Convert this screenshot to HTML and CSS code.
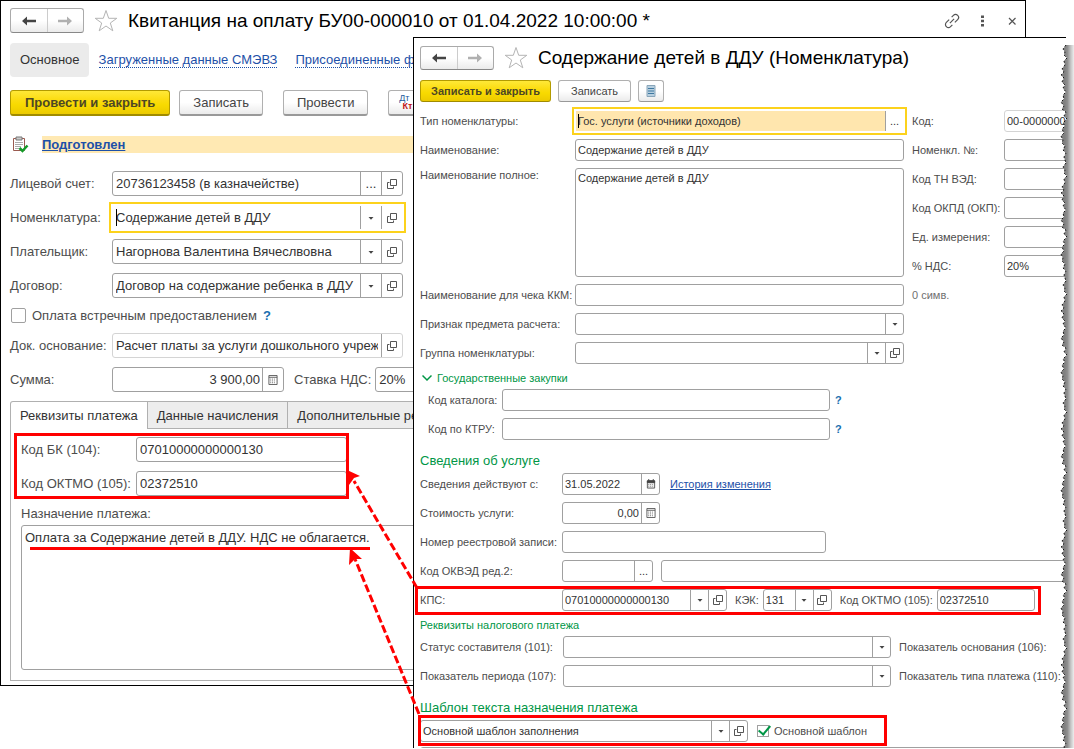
FILE: index.html
```html
<!DOCTYPE html>
<html lang="ru">
<head>
<meta charset="utf-8">
<title>Квитанция на оплату</title>
<link rel="stylesheet" href="styles.css">
</head>
<body>
<svg class="defs" aria-hidden="true">
  <symbol id="back" viewBox="0 0 16 12"><path d="M1 6L6 1.500V4.800H15V7.200H6V10.500Z" fill="#444"/></symbol>
  <symbol id="fwd" viewBox="0 0 16 12"><path d="M15 6L10 1.500V4.800H1V7.200H10V10.500Z" fill="#b0b0b0"/></symbol>
  <symbol id="star" viewBox="0 0 24 24"><path d="M12 1.500L14.700 9.300H22.800L16.300 14L18.800 21.800L12 17L5.200 21.800L7.700 14L1.200 9.300H9.300Z" fill="#fff" stroke="#b4b4b4"/></symbol>
  <symbol id="open" viewBox="0 0 10 10"><path d="M3.500 .5H9.500V6.500H3.500ZM2.500 3.500H.5V9.500H6.500V7.500" fill="none" stroke="#555"/></symbol>
  <symbol id="down" viewBox="0 0 10 10"><path d="M2.500 4H7.500L5 6.800Z" fill="#444"/></symbol>
  <symbol id="calc" viewBox="0 0 10 11"><path d="M.5 .5H9.500V10.500H.5ZM.5 2.500H9.500" fill="none" stroke="#555"/><path d="M2 4.500H8M2 6.500H8M2 8.500H8" stroke="#666" stroke-dasharray="1 1"/></symbol>
  <symbol id="date" viewBox="0 0 10 11"><path d="M1 2H9V10H1Z" fill="#eee" stroke="#555"/><path d="M1 2H9V4H1ZM2.500 0V3M7.500 0V3" fill="#444" stroke="#444"/><path d="M2 6H8M2 8H8" stroke="#888" stroke-dasharray="1 1"/></symbol>
</svg>

<main class="desk">
  <section class="window receipt">
    <header class="titlebar">
      <div class="history"><button aria-label="Назад"><svg><use href="#back"/></svg></button><button aria-label="Вперед"><svg><use href="#fwd"/></svg></button></div>
      <button class="star" aria-label="В избранное"><svg><use href="#star"/></svg></button>
      <h1>Квитанция на оплату БУ00-000010 от 01.04.2022 10:00:00 *</h1>
      <div class="tools">
        <button aria-label="Ссылка"><svg viewBox="0 0 16 16"><g transform="rotate(-45 8 8)" fill="none" stroke="#555" stroke-width="1.200"><path d="M7 5H3A3 3 0 0 0 3 11H5.500M9 11H13A3 3 0 0 0 13 5H10.500M5 8H11"/></g></svg></button>
        <button aria-label="Меню"><svg viewBox="0 0 16 16"><path d="M7 2.500H10V5H7ZM7 6.800H10V9.300H7ZM7 11H10V13.500H7Z" fill="#555"/></svg></button>
        <button aria-label="Закрыть"><svg viewBox="0 0 16 16"><path d="M5 5L11.500 11.500M11.500 5L5 11.500" stroke="#555" stroke-width="1.200"/></svg></button>
      </div>
    </header>
    <nav class="sections">
      <a class="current" href="#main">Основное</a>
      <a href="#smev">Загруженные данные СМЭВЗ</a>
      <a href="#files">Присоединенные файлы</a>
    </nav>
    <div class="commands">
      <button class="btn primary">Провести и закрыть</button>
      <button class="btn">Записать</button>
      <button class="btn post">Провести</button>
      <button class="btn entries" aria-label="Дт Кт"><span class="dt">Дт</span><span class="kt">Кт</span></button>
    </div>
    <div class="status">
      <svg viewBox="0 0 17 17"><path d="M1.500 2.500H12.500V14.500H1.500Z" fill="#fff" stroke="#9a5a50"/><path d="M4 1H10V4H4Z" fill="#ccc" stroke="#777"/><path d="M3 6.500H11M3 8.500H11M3 10.500H9M3 12.500H7" stroke="#aaa"/><path d="M7.500 12L10.500 15L15.500 9.500" fill="none" stroke="#149a28" stroke-width="2.500"/></svg>
      <a href="#state">Подготовлен</a>
    </div>
    <div class="form">
      <div class="row"><label for="account">Лицевой счет:</label><div class="field"><input id="account" value="20736123458 (в казначействе)"><button aria-label="Выбрать">...</button><button aria-label="Открыть"><svg><use href="#open"/></svg></button></div></div>
      <div class="row"><label for="item">Номенклатура:</label><div class="field active"><span class="caret"></span><input id="item" value="Содержание детей в ДДУ"><button aria-label="Список"><svg><use href="#down"/></svg></button><button aria-label="Открыть"><svg><use href="#open"/></svg></button></div></div>
      <div class="row"><label for="payer">Плательщик:</label><div class="field"><input id="payer" value="Нагорнова Валентина Вячеслвовна"><button aria-label="Список"><svg><use href="#down"/></svg></button><button aria-label="Открыть"><svg><use href="#open"/></svg></button></div></div>
      <div class="row"><label for="contract">Договор:</label><div class="field"><input id="contract" value="Договор на содержание ребенка в ДДУ"><button aria-label="Список"><svg><use href="#down"/></svg></button><button aria-label="Открыть"><svg><use href="#open"/></svg></button></div></div>
      <div class="check"><input type="checkbox" id="counter"><label for="counter">Оплата встречным предоставлением</label><button class="help">?</button></div>
      <div class="row"><label for="basis">Док. основание:</label><div class="field readonly"><input id="basis" value="Расчет платы за услуги дошкольного учреждения" readonly><button aria-label="Открыть"><svg><use href="#open"/></svg></button></div></div>
      <div class="row"><label for="sum">Сумма:</label><div class="field sum"><input id="sum" value="3 900,00"><button aria-label="Калькулятор"><svg><use href="#calc"/></svg></button></div><label class="rate" for="rate">Ставка НДС:</label><div class="field short"><input id="rate" value="20%"></div></div>
    </div>
    <div class="tabs"><button class="selected">Реквизиты платежа</button><button>Данные начисления</button><button>Дополнительные реквизиты</button></div>
    <div class="panel">
      <div class="row"><label for="kbk">Код БК (104):</label><div class="field"><input id="kbk" value="07010000000000130"></div></div>
      <div class="row"><label for="oktmo">Код ОКТМО (105):</label><div class="field"><input id="oktmo" value="02372510"></div></div>
      <div class="purpose"><label for="purpose">Назначение платежа:</label><textarea id="purpose">Оплата за Содержание детей в ДДУ. НДС не облагается.</textarea></div>
    </div>
  </section>

  <section class="window item">
    <header class="titlebar">
      <div class="history"><button aria-label="Назад"><svg><use href="#back"/></svg></button><button aria-label="Вперед"><svg><use href="#fwd"/></svg></button></div>
      <button class="star" aria-label="В избранное"><svg><use href="#star"/></svg></button>
      <h1>Содержание детей в ДДУ (Номенклатура)</h1>
    </header>
    <div class="commands">
      <button class="btn primary">Записать и закрыть</button>
      <button class="btn">Записать</button>
      <button class="btn report" aria-label="Отчет"><svg viewBox="0 0 10 12"><path d="M1 .5H9V11.500H1Z" fill="#b8d0e0" stroke="#8aa6ba"/><path d="M2 3.500H8M2 6H8M2 8.500H8" stroke="#3f78a0"/></svg></button>
    </div>
    <div class="columns">
      <div class="stack">
        <div class="row"><label for="kind">Тип номенклатуры:</label><div class="field active tinted"><span class="caret"></span><input id="kind" value="Гос. услуги (источники доходов)"><button aria-label="Выбрать">...</button></div></div>
        <div class="row"><label for="name">Наименование:</label><div class="field"><input id="name" value="Содержание детей в ДДУ"></div></div>
        <div class="row tall"><label for="full">Наименование полное:</label><textarea id="full">Содержание детей в ДДУ</textarea></div>
        <div class="row"><label for="kkm">Наименование для чека ККМ:</label><div class="field"><input id="kkm"></div></div>
        <div class="row"><label for="subject">Признак предмета расчета:</label><div class="field"><input id="subject"><button aria-label="Список"><svg><use href="#down"/></svg></button></div></div>
        <div class="row"><label for="group">Группа номенклатуры:</label><div class="field"><input id="group"><button aria-label="Список"><svg><use href="#down"/></svg></button><button aria-label="Открыть"><svg><use href="#open"/></svg></button></div></div>
      </div>
      <div class="stack codes">
        <div class="row"><label for="code">Код:</label><div class="field readonly"><input id="code" value="00-00000001" readonly></div></div>
        <div class="row"><label for="num">Номенкл. №:</label><div class="field"><input id="num"></div></div>
        <div class="row"><label for="tnved">Код ТН ВЭД:</label><div class="field"><input id="tnved"></div></div>
        <div class="row"><label for="okpd">Код ОКПД (ОКП):</label><div class="field"><input id="okpd"></div></div>
        <div class="row"><label for="unit">Ед. измерения:</label><div class="field"><input id="unit"></div></div>
        <div class="row"><label for="vat">% НДС:</label><div class="field"><input id="vat" value="20%"></div></div>
        <div class="row count">0 симв.</div>
      </div>
    </div>
    <button class="group"><svg viewBox="0 0 10 8"><path d="M.5 1.500L5 6L9.500 1.500" fill="none" stroke="#009646" stroke-width="1.500"/></svg>Государственные закупки</button>
    <div class="stack purchase">
      <div class="row"><label for="catalog">Код каталога:</label><div class="field"><input id="catalog"></div><button class="help">?</button></div>
      <div class="row"><label for="ktru">Код по КТРУ:</label><div class="field"><input id="ktru"></div><button class="help">?</button></div>
    </div>
    <h2>Сведения об услуге</h2>
    <div class="stack service">
      <div class="row"><label for="since">Сведения действуют с:</label><div class="field small"><input id="since" value="31.05.2022"><button aria-label="Календарь"><svg><use href="#date"/></svg></button></div><a href="#history">История изменения</a></div>
      <div class="row"><label for="cost">Стоимость услуги:</label><div class="field small sum"><input id="cost" value="0,00"><button aria-label="Калькулятор"><svg><use href="#calc"/></svg></button></div></div>
      <div class="row"><label for="registry">Номер реестровой записи:</label><div class="field wide"><input id="registry"></div></div>
      <div class="row"><label for="okved">Код ОКВЭД ред.2:</label><div class="field tiny"><input id="okved"><button aria-label="Выбрать">...</button></div><div class="field grow"><input aria-label="Наименование ОКВЭД"></div></div>
      <div class="row"><label for="kps">КПС:</label><div class="field kps"><input id="kps" value="07010000000000130"><button aria-label="Список"><svg><use href="#down"/></svg></button><button aria-label="Открыть"><svg><use href="#open"/></svg></button></div><label class="inline" for="kek">КЭК:</label><div class="field kek"><input id="kek" value="131"><button aria-label="Список"><svg><use href="#down"/></svg></button><button aria-label="Открыть"><svg><use href="#open"/></svg></button></div><label class="inline" for="oktmo2">Код ОКТМО (105):</label><div class="field small"><input id="oktmo2" value="02372510"></div></div>
    </div>
    <h3>Реквизиты налогового платежа</h3>
    <div class="stack tax">
      <div class="row"><label for="st">Статус составителя (101):</label><div class="field"><input id="st"><button aria-label="Список"><svg><use href="#down"/></svg></button></div><span>Показатель основания (106):</span></div>
      <div class="row"><label for="period">Показатель периода (107):</label><div class="field"><input id="period"><button aria-label="Список"><svg><use href="#down"/></svg></button></div><span>Показатель типа платежа (110):</span></div>
    </div>
    <h2>Шаблон текста назначения платежа</h2>
    <div class="template">
      <div class="field"><input aria-label="Шаблон" value="Основной шаблон заполнения"><button aria-label="Список"><svg><use href="#down"/></svg></button><button aria-label="Открыть"><svg><use href="#open"/></svg></button></div>
      <input type="checkbox" id="default" checked><label for="default">Основной шаблон</label>
    </div>
    <textarea class="template-text" aria-label="Текст шаблона"></textarea>
  </section>

  <svg class="torn" aria-hidden="true">
    <defs>
      <linearGradient id="fade"><stop offset=".3" stop-color="#808080"/><stop offset=".5" stop-color="#909090"/><stop offset=".75" stop-color="#c4c4c4"/><stop offset="1" stop-color="#eee"/></linearGradient>
      <pattern id="edge" width="14" height="118" patternUnits="userSpaceOnUse">
        <path d="M6 0L3 4L5 7L4 10L7 13L4 16L5 20L2 24L4 27L1 30L4 33L2 37L5 40L3 43L6 47L3 50L4 54L1 57L4 61L2 64L6 67L4 71L7 74L3 78L5 81L2 84L4 88L1 91L3 95L2 98L5 101L3 105L6 108L4 112L6 118L14 118V0Z" fill="url(#fade)"/>
        <path d="M6 0L3 4L5 7L4 10L7 13L4 16L5 20L2 24L4 27L1 30L4 33L2 37L5 40L3 43L6 47L3 50L4 54L1 57L4 61L2 64L6 67L4 71L7 74L3 78L5 81L2 84L4 88L1 91L3 95L2 98L5 101L3 105L6 108L4 112L6 118" fill="none" stroke="#111" stroke-dasharray="2 2"/>
      </pattern>
    </defs>
    <rect width="14" height="100%" fill="url(#edge)"/>
  </svg>
  <svg class="marks" aria-hidden="true">
    <g fill="none" stroke="#f00" stroke-width="3">
      <rect x="15.500" y="434.500" width="332" height="63"/>
      <path d="M30 548.500H370"/>
      <rect x="416.500" y="587.500" width="623" height="26"/>
      <rect x="419.500" y="716.500" width="466" height="28"/>
      <path d="M417 588L354 481M419 714L355 559" stroke-dasharray="8 3"/>
    </g>
    <path d="M347 470L360 476L354 478L349 485ZM350 548L362 559L355 559L349 565Z" fill="#f00"/>
  </svg>
</main>
</body>
</html>
```

FILE: styles.css
```css
* { box-sizing: border-box; }
body { margin: 0; background: #fff; color: #333; font: 13px/17px "Liberation Sans", Arial, sans-serif; }
button, input, textarea { font: inherit; color: inherit; margin: 0; padding: 0; }
button { border: 0; background: none; }
h1, h2, h3 { margin: 0; font-weight: normal; }
a { color: #1d50a8; }
label { color: #4d4d4d; white-space: nowrap; }
.defs { position: absolute; width: 0; height: 0; }
.desk { position: relative; height: 100vh; overflow: hidden; }

/* windows */
.window { position: absolute; background: #fff; overflow: hidden; }
.receipt { left: 0; top: 0; right: 48px; border: 1px solid #000; padding: 7px 9px 4px; }
.item { left: 413px; top: 37px; right: 8px; bottom: 1px; border: solid #000; border-width: 1px 0 0 1px; padding: 8px 0 0 6px; font-size: 11px; line-height: 14px; }

/* title bar */
.titlebar { display: flex; align-items: center; height: 25px; }
.titlebar h1 { flex: 1; color: #000; font-size: 19px; line-height: 24px; white-space: nowrap; }
.history { display: flex; width: 74px; height: 25px; border: 1px solid #aaa; border-bottom-color: #888; border-radius: 3px; background: linear-gradient(#fff 50%, #ebebeb); }
.history button { flex: 1; display: grid; place-items: center; }
.history button + button { border-left: 1px solid #ccc; }
.history svg { width: 16px; height: 12px; }
.star { margin: 0 10px; width: 24px; height: 24px; }
.star svg { width: 24px; height: 24px; }
.tools { display: flex; gap: 14px; margin-right: -4px; }
.tools button, .tools svg { display: block; width: 16px; height: 16px; }

.sections { display: flex; align-items: center; gap: 18px; margin-top: 10px; white-space: nowrap; }
.sections a { text-decoration: none; border-bottom: 1px dotted #1d50a8; line-height: 15px; }
.sections .current { padding: 0 9px 0 10px; border: 0; border-radius: 4px; background: #ebebeb; color: #333; line-height: 34px; margin-right: -8px; }

/* commands */
.commands { display: flex; gap: 9px; margin-top: 13px; }
.btn { height: 26px; padding: 0 13px; border: 1px solid #b0b0b0; border-bottom: 2px solid #999; border-radius: 3px; background: linear-gradient(#fff 50%, #ebebeb); color: #444; }
.btn.primary { padding: 0 14px; border-color: #b39b00; border-bottom-color: #a08b00; background: linear-gradient(#ffe838, #fbdc10 40%, #f8da00 60%, #ecca00); color: #4d4724; font-weight: bold; }
.btn.post { margin-left: 11px; }
.btn.entries { display: flex; flex-direction: column; margin-left: 11px; padding: 3px 7px; font-size: 9px; line-height: 8px; }
.dt { color: #1d5a9a; }
.kt { margin-left: 6px; color: #c01818; font-weight: bold; }
.item .commands { gap: 7px; margin-top: 10px; }
.item .btn { height: 22px; padding: 0 12px; border-bottom-width: 1px; }
.item .btn.primary { padding: 0 10px; }
.item .btn.report { padding: 0 7px; }
.report svg { display: block; width: 10px; height: 12px; }

.status { display: flex; align-items: center; gap: 13px; margin-top: 20px; height: 17px; }
.status svg { width: 17px; height: 17px; margin-left: 2px; flex: none; }
.status a { flex: 1; background: #ffe9b3; font-weight: bold; }

/* fields */
.row { display: flex; align-items: center; }
.field { position: relative; display: flex; height: 25px; min-width: 0; border: 1px solid #a0a0a0; border-radius: 3px; background: #fff; }
.field input { flex: 1; width: 0; min-width: 0; padding: 0 3px; border: 0; background: none; outline: 0; }
.field button { display: grid; place-items: center; width: 21px; flex: none; border-left: 1px solid #a0a0a0; }
.field svg { width: 10px; height: 10px; }
.readonly { border-color: #d4d4d4; }
.active { border-color: transparent; border-radius: 0; outline: 2px solid #fcd21c; outline-offset: 1px; }
.caret { position: absolute; left: 3px; top: 3px; bottom: 3px; width: 1px; background: #000; }
.sum input { text-align: right; padding-right: 2px; }
.help { color: #1a6fb0; font-weight: bold; }
textarea { display: block; resize: none; border: 1px solid #a0a0a0; border-radius: 3px; outline: 0; padding: 3px; overflow: hidden; }

.form { display: flex; flex-direction: column; gap: 9px; margin-top: 18px; }
.form .row > label:first-child { width: 102px; }
.form .field { width: 291px; }
.form .sum { width: 172px; }
.form .short { width: 90px; }
.form .rate { margin: 0 4px 0 10px; }
.check { display: flex; align-items: center; height: 17px; }
.check .help { margin-left: 6px; }
input[type="checkbox"] { appearance: none; width: 15px; height: 15px; border: 1px solid #a0a0a0; border-radius: 2px; background: #fff; }
.check input { margin: 0 6px 0 1px; }

/* tabs */
.tabs { display: flex; margin-top: 9px; margin-right: -9px; }
.tabs button { height: 27px; padding: 0 9px; border: 1px solid #b0b0b0; border-bottom: 0; border-left-width: 0; background: #ededed; white-space: nowrap; }
.tabs .selected { position: relative; margin-bottom: -1px; height: 28px; border-left-width: 1px; border-radius: 3px 0 0; background: #fff; }
.panel { display: flex; flex-direction: column; gap: 9px; border: 1px solid #b0b0b0; padding: 8px 10px 10px; }
.panel .row label { width: 115px; }
.panel .field { width: 211px; }
.purpose label { display: block; margin-bottom: 3px; }
.purpose textarea { width: 100%; height: 145px; }

/* item card */
.item .history { height: 24px; }
.item .titlebar { height: 24px; }
.stack { display: flex; flex-direction: column; gap: 7px; }
.item .field { height: 22px; }
.item .field button { width: 18px; }
.item .field input { padding: 0 2px; }
.tinted input { background: #ffe6ae; }
.tinted .caret { left: 2px; }
.columns { display: flex; gap: 8px; margin-top: 8px; }
.columns .stack { width: 484px; flex: none; }
.columns .stack label { width: 155px; flex: none; }
.columns .field, .tall textarea { flex: 1; }
.tall { align-items: flex-start; }
.tall textarea { height: 109px; padding: 2px; }
.columns .stack.codes { flex: 1 0 0; width: auto; }
.columns .codes label { width: 92px; }
.count { height: 22px; color: #707070; }
.codes { margin-right: -20px; }
.group { display: flex; align-items: center; gap: 5px; margin: 7px 0 4px 2px; color: #009646; line-height: 14px; }
.group svg { width: 10px; height: 8px; }
.purchase { padding-left: 8px; }
.purchase label { width: 74px; }
.purchase .field { width: 328px; }
.purchase .help { margin-left: 5px; }
.item h2 { margin: 11px 0 2px; color: #009646; font-size: 13px; line-height: 20px; }
.item h3 { margin: 7px 0 4px; color: #009646; font-size: 11px; line-height: 14px; }
.service label { width: 142px; }
.service .inline { width: auto; margin: 0 4px 0 8px; }
.service a { margin-left: 10px; }
.small { width: 98px; }
.wide { width: 264px; }
.tiny { width: 91px; margin-right: 8px; }
.grow { flex: 1; margin-right: -20px; }
.kps { width: 165px; }
.kek { width: 69px; }
.tax label { width: 143px; }
.tax .field { width: 328px; flex: none; }
.tax span { margin-left: 8px; color: #4d4d4d; white-space: nowrap; }
.template { display: flex; align-items: center; }
.template .field { width: 328px; }
.template input[type="checkbox"] { position: relative; width: 12px; height: 12px; margin: 0 5px 0 9px; border-radius: 0; }
.template input[type="checkbox"]::after { content: ""; position: absolute; left: 3px; top: -3px; width: 5px; height: 10px; border: solid #009646; border-width: 0 2px 2px 0; transform: rotate(40deg); }
.template-text { width: calc(100% + 20px); height: 60px; margin-top: 5px; }

/* overlays */
.torn { position: absolute; right: 0; top: 45px; width: 14px; height: calc(100% - 46px); }
.marks { position: absolute; left: 0; top: 0; width: 1074px; height: 749px; pointer-events: none; }
```
